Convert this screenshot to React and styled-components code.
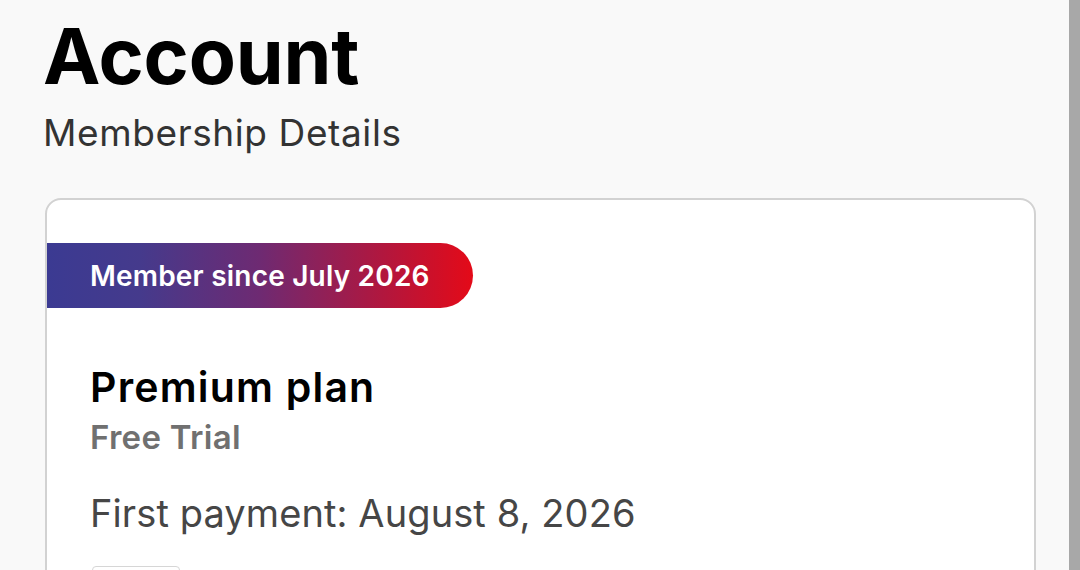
import React from "react";
import styled, { createGlobalStyle } from "styled-components";

const GlobalStyle = createGlobalStyle`
  html, body {
    margin: 0;
    height: 100%;
  }
  body {
    background: #f9f9f9;
    font-family: Inter, "Noto Sans", Arial, sans-serif;
    -webkit-font-smoothing: antialiased;
  }
`;

const Frame = styled.div`
  display: flex;
  height: 100vh;
  overflow: hidden;
`;

const Page = styled.main`
  flex: 1;
  min-width: 0;
  padding: 11px 33px 40px 45px;
`;

const ScrollTrack = styled.div`
  flex: 0 0 11px;
  background: #a8a8a8;
`;

const Header = styled.header`
  margin-left: -2px;
`;

const Title = styled.h1`
  margin: 0;
  font-size: 77px;
  line-height: 90px;
  font-weight: 700;
  letter-spacing: -0.2px;
  color: #000;
`;

const Subtitle = styled.h2`
  margin: 8px 0 0;
  font-size: 37px;
  line-height: 48px;
  font-weight: 400;
  letter-spacing: 0.6px;
  color: #333;
`;

const Card = styled.section`
  margin-top: 41px;
  background: #fff;
  border: 2px solid #d2d2d2;
  border-radius: 16px;
  padding: 43px 0 60px;
`;

const Badge = styled.div`
  display: inline-flex;
  align-items: center;
  height: 65px;
  padding: 0 43px 0 43px;
  border-radius: 0 33px 33px 0;
  background: linear-gradient(90deg, #3b3a92 0%, #453a8c 22%, #6e2a72 50%, #b4163c 80%, #e40a18 100%);
  color: #fff;
  font-size: 28px;
  font-weight: 600;
  letter-spacing: 0.2px;
`;

const Body = styled.div`
  padding: 54px 43px 0;
  display: flex;
  flex-direction: column;
`;

const PlanName = styled.div`
  font-size: 41px;
  line-height: 50px;
  font-weight: 600;
  letter-spacing: 1.2px;
  color: #000;
`;

const PlanStatus = styled.div`
  margin-top: 2px;
  font-size: 33px;
  line-height: 46px;
  font-weight: 600;
  letter-spacing: 0.3px;
  color: #707070;
`;

const PaymentLine = styled.div`
  margin-top: 30px;
  font-size: 38px;
  line-height: 46px;
  font-weight: 400;
  letter-spacing: 0.1px;
  color: #464646;
`;

const SmallButton = styled.button`
  margin: 30px 0 0 2px;
  align-self: flex-start;
  width: 88px;
  height: 40px;
  border: 1px solid #d6d6d6;
  border-radius: 4px;
  background: #fff;
`;

export default function App() {
  return (
    <>
      <GlobalStyle />
      <Frame>
        <Page>
          <Header>
            <Title>Account</Title>
            <Subtitle>Membership Details</Subtitle>
          </Header>
          <Card>
            <Badge>Member since July 2026</Badge>
            <Body>
              <PlanName>Premium plan</PlanName>
              <PlanStatus>Free Trial</PlanStatus>
              <PaymentLine>First payment: August 8, 2026</PaymentLine>
              <SmallButton aria-label="Change plan" />
            </Body>
          </Card>
        </Page>
        <ScrollTrack />
      </Frame>
    </>
  );
}
